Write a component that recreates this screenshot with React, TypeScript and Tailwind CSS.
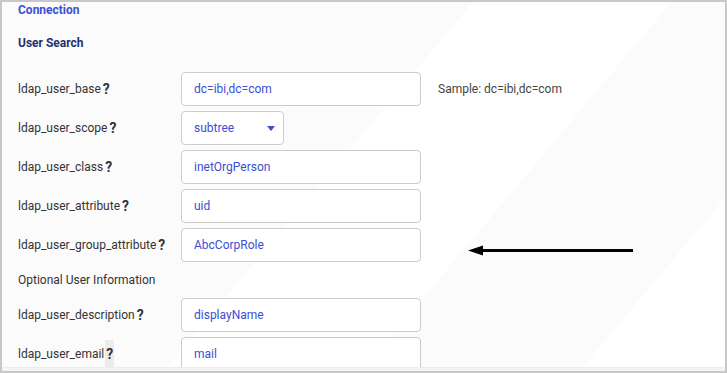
type Field = {
  label: string
  value: string
  select?: boolean
  hint?: string
  hovered?: boolean
}

const searchFields: Field[] = [
  { label: 'ldap_user_base', value: 'dc=ibi,dc=com', hint: 'Sample: dc=ibi,dc=com' },
  { label: 'ldap_user_scope', value: 'subtree', select: true },
  { label: 'ldap_user_class', value: 'inetOrgPerson' },
  { label: 'ldap_user_attribute', value: 'uid' },
  { label: 'ldap_user_group_attribute', value: 'AbcCorpRole' },
]

const optionalFields: Field[] = [
  { label: 'ldap_user_description', value: 'displayName' },
  { label: 'ldap_user_email', value: 'mail', hovered: true },
]

const FieldRow = ({ field }: { field: Field }) => {
  return (
    <div className="flex items-center h-[34px] shrink-0">
      <div className="w-[163px] flex items-center text-[12px] text-[#333333]">
        <span>{field.label}</span>
        <span
          className={`ml-[1px] px-[1px] font-bold text-[14px] leading-[28px] ${field.hovered ? 'bg-[#ececec]' : ''}`}
        >
          ?
        </span>
      </div>

      {field.select ? (
        <div className="w-[103px] h-[34px] flex items-center justify-between pl-3 pr-[8px] bg-white border border-[#cccccc] rounded-[4px] text-[12px] text-[#3a4fd2]">
          <span>{field.value}</span>
          {/* caret */}
          <svg width="8" height="5" viewBox="0 0 8 5" className="mt-[1px]">
            <path d="M0 0 H8 L4 5 Z" fill="#3a4fd2" />
          </svg>
        </div>
      ) : (
        <div className="w-[240px] h-[34px] flex items-center px-3 bg-white border border-[#cccccc] rounded-[4px] text-[12px] text-[#3a4fd2]">
          {field.value}
        </div>
      )}

      {field.hint && (
        <span className="ml-[17px] text-[12px] text-[#444444]">{field.hint}</span>
      )}
    </div>
  )
}

export default function App() {
  return (
    <div
      className="w-[727px] h-[373px] border-2 border-[#c8c8c8] bg-white flex flex-col overflow-hidden"
      style={{ fontFamily: 'Roboto, "Liberation Sans", sans-serif' }}
    >
      <div className="relative h-[365px] overflow-hidden shrink-0">
        {/* faint diagonal background bands */}
        <svg className="absolute inset-0" width="723" height="365" viewBox="2 2 723 365">
          <polygon points="0,0 475,0 162,373 0,373" fill="#fbfbfb" />
          <polygon points="673,0 891,0 578,373 360,373" fill="#fbfbfb" />
        </svg>

        <div className="relative flex flex-col pl-[16px]">
          {/* Header */}
          <div className="flex h-[49px]">
            <div className="w-[491px] flex flex-col">
              <div className="text-[12px] leading-[16px] font-bold text-[#3b50d6]">Connection</div>
              <div className="mt-[17px] text-[12px] leading-[16px] font-bold text-[#25306e]">User Search</div>
            </div>
            <div className="w-[70px] flex flex-col">
              <div className="mt-[22px] h-[2px] bg-[#eeeeee]" />
              <div className="mt-[30px] h-[2px] bg-gradient-to-r from-[#3b50d6] to-[#9a2fa6]" />
            </div>
          </div>

          {/* Form */}
          <div className="mt-[21px] flex flex-col gap-[5px]">
            {searchFields.map((f) => (
              <FieldRow key={f.label} field={f} />
            ))}
            <div className="h-[26px] flex items-center text-[12px] text-[#333333]">
              Optional User Information
            </div>
            {optionalFields.map((f) => (
              <FieldRow key={f.label} field={f} />
            ))}
          </div>
        </div>

        {/* annotation arrow */}
        <svg className="absolute left-[464px] top-[242px]" width="172" height="14" viewBox="0 0 172 14">
          <line x1="14" y1="6.5" x2="167" y2="6.5" stroke="#000" strokeWidth="3" />
          <path d="M2 6.5 L17 1.5 L17 11.5 Z" fill="#000" />
        </svg>
      </div>
      <div className="flex-1 bg-[#f4f4f4] border-t border-[#ececec]" />
    </div>
  )
}
